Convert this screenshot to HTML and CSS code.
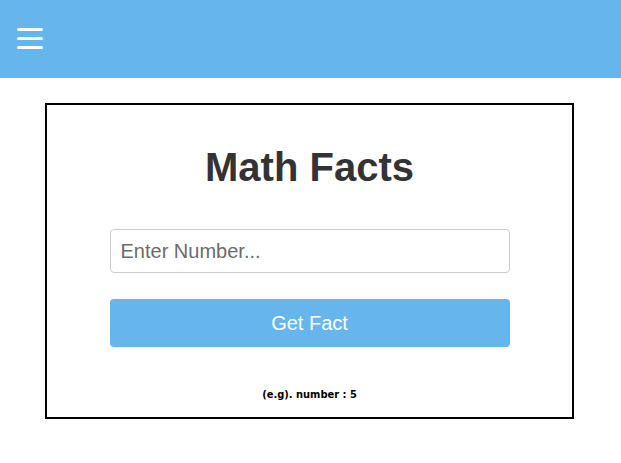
FILE: index.html
```html
<!DOCTYPE html>
<html>
<head>
<meta charset="utf-8">
<link rel="stylesheet" href="styles.css">
</head>
<body>
<header class="topbar">
  <button class="menu" aria-label="Menu">
    <span></span><span></span><span></span>
  </button>
</header>
<main class="card">
  <h1 class="title">Math Facts</h1>
  <input class="field" type="text" placeholder="Enter Number...">
  <button class="submit">Get Fact</button>
  <p class="hint">(e.g). number : 5</p>
</main>
</body>
</html>
```
FILE: styles.css
```css
* { box-sizing: border-box; }
body {
  margin: 0;
  font-family: "Liberation Sans", Arial, sans-serif;
  background: #fff;
}
.topbar {
  height: 78px;
  background: #66b6ed;
  display: flex;
  align-items: center;
  padding-left: 17px;
}
.menu {
  border: 0;
  background: transparent;
  padding: 0;
  display: flex;
  flex-direction: column;
  gap: 6px;
  margin-top: -1px;
}
.menu span {
  display: block;
  width: 26px;
  height: 3px;
  background: #fff;
  border-radius: 2px;
}
.card {
  width: 529px;
  margin: 25px auto 0 45px;
  border: 2px solid #000;
  height: 316px;
  display: flex;
  flex-direction: column;
  align-items: center;
  padding-top: 39px;
}
.title {
  margin: 0;
  font-size: 40px;
  font-weight: bold;
  color: #333;
  line-height: 46px;
}
.field {
  margin-top: 39px;
  width: 400px;
  height: 44px;
  border: 1px solid #ccc;
  border-radius: 4px;
  padding: 0 10px;
  font-family: "Liberation Sans", Arial, sans-serif;
  font-size: 20px;
  color: #333;
}
.field::placeholder { color: #6b6b6b; }
.submit {
  margin-top: 26px;
  width: 400px;
  height: 48px;
  border: 0;
  border-radius: 4px;
  background: #66b6ed;
  color: #fff;
  font-family: "Liberation Sans", Arial, sans-serif;
  font-size: 20px;
}
.hint {
  margin: 41px 0 0;
  font-family: "DejaVu Sans Condensed", "DejaVu Sans", sans-serif;
  font-weight: bold;
  font-size: 11px;
  color: #000;
}
```
